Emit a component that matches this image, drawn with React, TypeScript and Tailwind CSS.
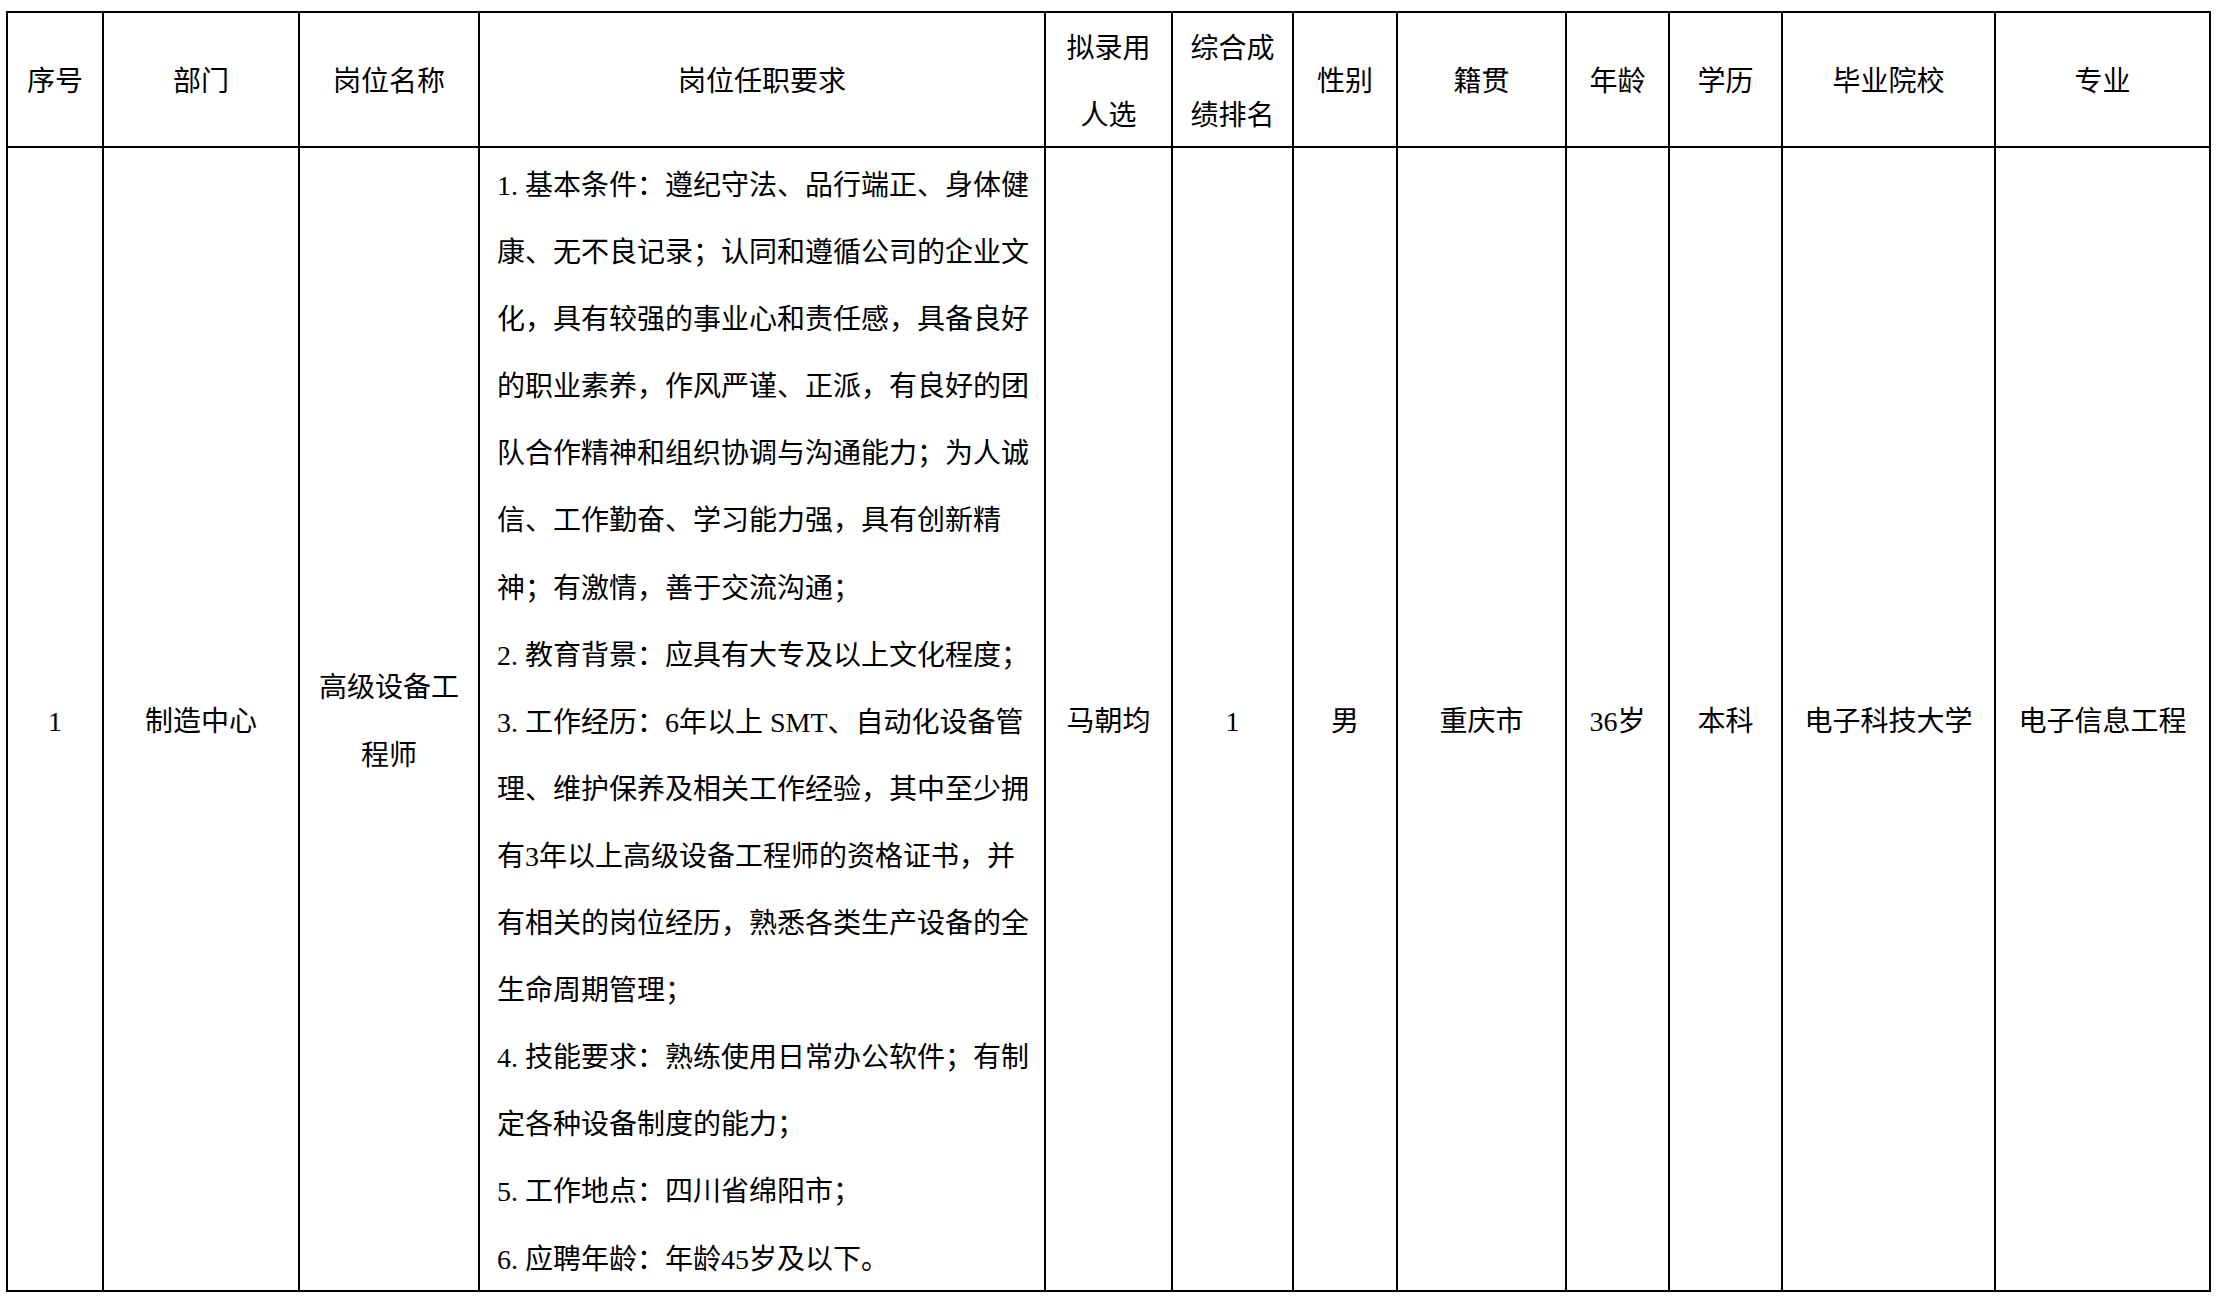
const font = 'font-["Liberation_Serif","Noto_Sans_CJK_SC",serif]'

const headers: string[][] = [
  ['序号'],
  ['部门'],
  ['岗位名称'],
  ['岗位任职要求'],
  ['拟录用', '人选'],
  ['综合成', '绩排名'],
  ['性别'],
  ['籍贯'],
  ['年龄'],
  ['学历'],
  ['毕业院校'],
  ['专业'],
]

// [number prefix, text]
const requirements: [string, string][] = [
  ['1.', '基本条件：遵纪守法、品行端正、身体健'],
  ['', '康、无不良记录；认同和遵循公司的企业文'],
  ['', '化，具有较强的事业心和责任感，具备良好'],
  ['', '的职业素养，作风严谨、正派，有良好的团'],
  ['', '队合作精神和组织协调与沟通能力；为人诚'],
  ['', '信、工作勤奋、学习能力强，具有创新精'],
  ['', '神；有激情，善于交流沟通；'],
  ['2.', '教育背景：应具有大专及以上文化程度；'],
  ['3.', '工作经历：6年以上 SMT、自动化设备管'],
  ['', '理、维护保养及相关工作经验，其中至少拥'],
  ['', '有3年以上高级设备工程师的资格证书，并'],
  ['', '有相关的岗位经历，熟悉各类生产设备的全'],
  ['', '生命周期管理；'],
  ['4.', '技能要求：熟练使用日常办公软件；有制'],
  ['', '定各种设备制度的能力；'],
  ['5.', '工作地点：四川省绵阳市；'],
  ['6.', '应聘年龄：年龄45岁及以下。'],
]

const rest = ['马朝均', '1', '男', '重庆市', '36岁', '本科', '电子科技大学', '电子信息工程']

function Cell({ last, children, className = '' }: { last?: boolean; children: React.ReactNode; className?: string }) {
  return (
    <div
      className={`flex flex-col items-center justify-center pt-[5px] text-center ${last ? '' : 'border-r-2'} border-black ${className}`}
    >
      {children}
    </div>
  )
}

export default function App() {
  return (
    <div className={`min-h-screen bg-white pl-[6px] pt-[11px] text-[28px] leading-[67.1px] text-black ${font}`}>
      <div className="grid w-[2205px] grid-cols-[96px_196px_180px_566px_127px_121px_104px_169px_103px_113px_213px_213px] grid-rows-[135px_1142px] border-2 border-black">
        {headers.map((h, i) => (
          <Cell key={i} last={i === headers.length - 1} className="border-b-2">
            {h.map((line) => (
              <span key={line} className="whitespace-nowrap">
                {line}
              </span>
            ))}
          </Cell>
        ))}

        <Cell>1</Cell>
        <Cell>制造中心</Cell>
        <Cell>
          <span className="whitespace-nowrap">高级设备工</span>
          <span className="whitespace-nowrap">程师</span>
        </Cell>
        <div className="border-r-2 border-black pl-[17px] pt-[4px] text-left">
          {requirements.map(([num, text]) => (
            <div key={text} className="whitespace-nowrap">
              {num && <span className="inline-block w-[28px]">{num}</span>}
              {text}
            </div>
          ))}
        </div>
        {rest.map((v, i) => (
          <Cell key={i} last={i === rest.length - 1}>
            <span className="whitespace-nowrap">{v}</span>
          </Cell>
        ))}
      </div>
    </div>
  )
}
